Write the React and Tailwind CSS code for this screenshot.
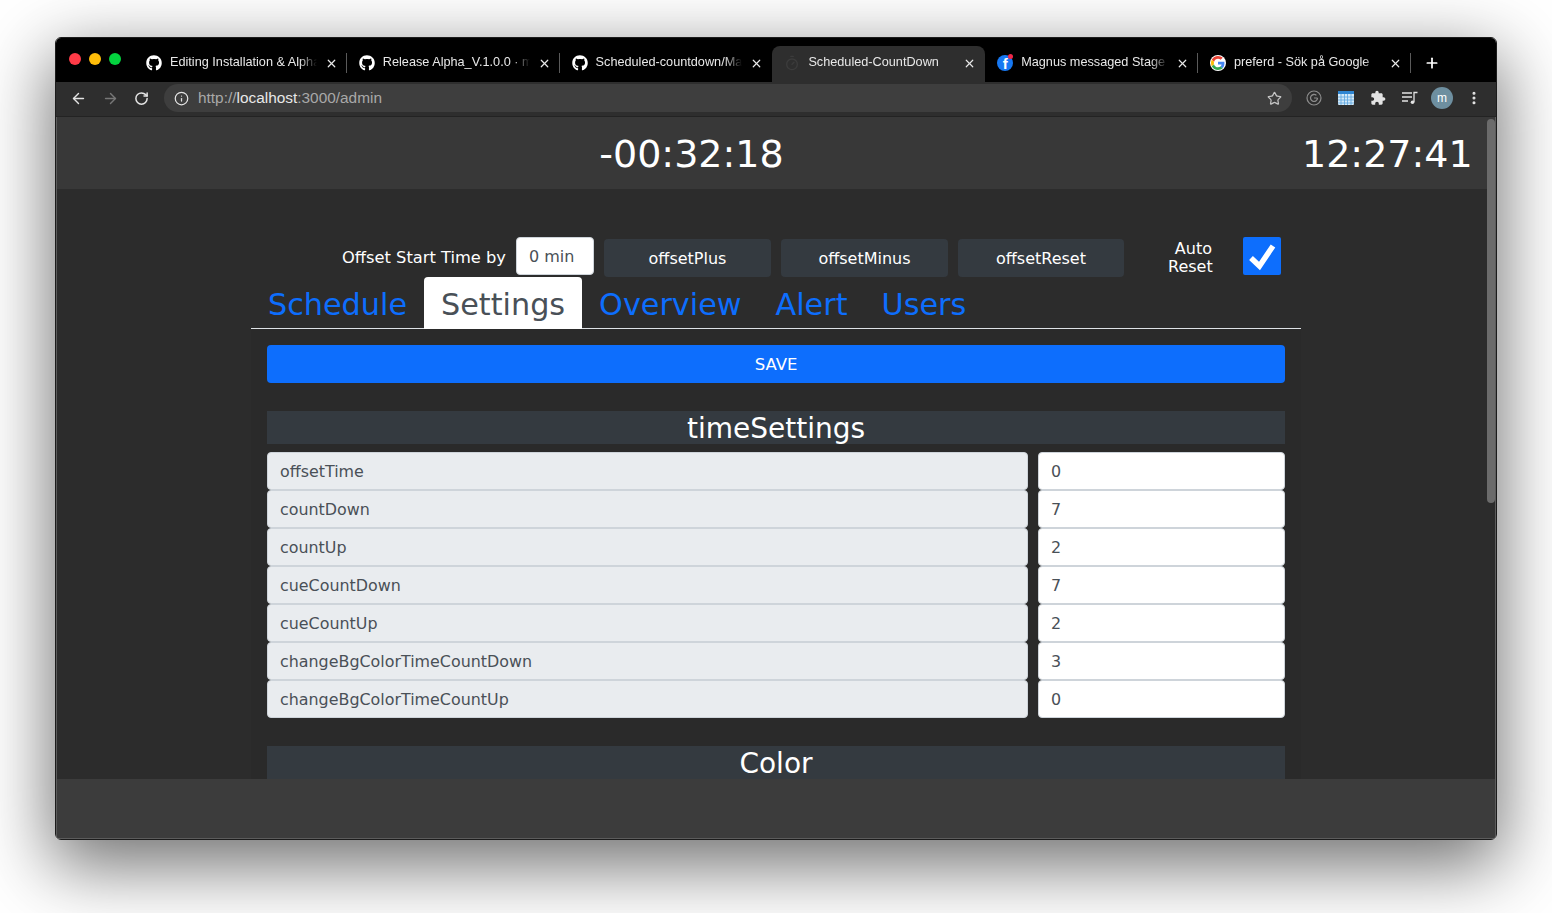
import React from 'react';
import { ArrowLeft, ArrowRight, RotateCw, Info, Star, X, Plus, Timer, EllipsisVertical } from 'lucide-react';
import { FaGithub } from 'react-icons/fa';

const GoogleIcon = () => (
  <span className="flex h-4 w-4 items-center justify-center rounded-full bg-white">
    <svg viewBox="0 0 48 48" className="h-[14px] w-[14px]">
      <path fill="#EA4335" d="M24 9.5c3.5 0 6.7 1.2 9.2 3.6l6.9-6.9C35.9 2.4 30.5 0 24 0 14.6 0 6.5 5.4 2.6 13.2l8 6.2C12.5 13.7 17.800 9.500 24 9.500z" />
      <path fill="#4285F4" d="M46.100 24.500c0-1.600-.1-3.100-.4-4.500H24v9h12.400c-.5 2.900-2.200 5.300-4.600 7l7.500 5.800c4.300-4 6.800-10 6.800-17.300z" />
      <path fill="#FBBC05" d="M10.600 28.600c-.5-1.400-.8-3-.8-4.600s.3-3.200.8-4.600l-8-6.200C.9 16.500 0 20.100 0 24s.9 7.500 2.600 10.800l8-6.200z" />
      <path fill="#34A853" d="M24 48c6.500 0 11.900-2.100 15.900-5.800l-7.500-5.800c-2.100 1.400-4.800 2.300-8.400 2.300-6.200 0-11.500-4.200-13.400-9.900l-8 6.200C6.500 42.600 14.600 48 24 48z" />
    </svg>
  </span>
);

const FacebookIcon = () => (
  <span className="relative flex h-4 w-4 items-end justify-center overflow-visible rounded-full bg-[#1778f2]">
    <span className="font-['Liberation_Sans',sans-serif] text-[15px] leading-[14px] font-bold text-white">f</span>
    <span className="absolute -top-[1px] right-0 h-[5px] w-[5px] rounded-full bg-[#f02849]" />
  </span>
);

const CircleIcon = () => (
  <svg viewBox="0 0 16 16" className="h-4 w-4" fill="none" stroke="#8c8c8c">
    <circle cx="8" cy="8" r="7" strokeWidth="1.2" />
    <path d="M11.500 8a3.500 3.500 0 1 1-1.100-2.600" strokeWidth="1.300" />
    <path d="M8 8h3.500" strokeWidth="1.100" />
  </svg>
);

const CalendarIcon = () => (
  <svg viewBox="0 0 16 14" className="h-[14px] w-4">
    <rect width="16" height="14" rx="1" fill="#d4e9f7" />
    <rect width="16" height="3" fill="#2f86d2" />
    <path d="M0 6h16M0 9h16M0 12h16M3 3v11M6.500 3v11M9.500 3v11M13 3v11" stroke="#5ba5e0" strokeWidth="0.8" />
  </svg>
);

const ExtensionIcon = () => (
  <svg viewBox="0 0 24 24" className="h-4 w-4" fill="#e3e3e3">
    <path d="M20.500 11H19V7c0-1.100-.9-2-2-2h-4V3.500C13 2.120 11.880 1 10.500 1S8 2.120 8 3.500V5H4c-1.100 0-1.990.9-1.990 2v3.800H3.500c1.490 0 2.700 1.210 2.700 2.700s-1.210 2.700-2.700 2.700H2V20c0 1.100.9 2 2 2h3.800v-1.500c0-1.490 1.210-2.700 2.700-2.700 1.490 0 2.700 1.210 2.700 2.700V22H17c1.100 0 2-.9 2-2v-4h1.500c1.380 0 2.500-1.120 2.500-2.500S21.880 11 20.500 11z" />
  </svg>
);

const QueueIcon = () => (
  <svg viewBox="0 0 16 14" className="h-[14px] w-4" fill="none" stroke="#e3e3e3" strokeWidth="1.300">
    <path d="M0 2h10M0 6h10M0 10h6" />
    <path d="M12 11V1.500h3.500" />
    <circle cx="10.500" cy="11.200" r="1.800" fill="#e3e3e3" stroke="none" />
  </svg>
);

const tabs = [
  { title: 'Editing Installation & Alpha Release', icon: <FaGithub size={16} className="text-white" />, divider: true },
  { title: 'Release Alpha_V.1.0.0 · magnus', icon: <FaGithub size={16} className="text-white" />, divider: true },
  { title: 'Scheduled-countdown/Main.js', icon: <FaGithub size={16} className="text-white" /> },
  { title: 'Scheduled-CountDown', icon: <Timer size={16} className="text-[#3c3c3c]" />, active: true },
  { title: 'Magnus messaged Stage - Timer', icon: <FacebookIcon />, divider: true },
  { title: 'preferd - Sök på Google', icon: <GoogleIcon />, divider: true },
];

const Tab = ({ title, icon, active, divider }) => (
  <div className={`flex h-[36px] w-[212.8px] items-center pb-[2px] pl-[12px] ${active ? 'rounded-t-lg bg-[#2e2e2e]' : ''}`}>
    <div className="w-4 shrink-0">{icon}</div>
    <span className="ml-2 min-w-0 flex-1 overflow-hidden text-[12.7px] whitespace-nowrap text-[#e8e8e8] [mask-image:linear-gradient(to_right,black_88%,transparent)]">
      {title}
    </span>
    <X size={13} strokeWidth={2.2} className="ml-2 shrink-0 text-[#e8e8e8]" />
    <div className={`ml-[8px] h-[20px] w-px shrink-0 ${divider ? 'bg-[#5a5a5a]' : 'bg-transparent'}`} />
  </div>
);

const BrowserChrome = () => (
  <div className="shrink-0 font-['Liberation_Sans',sans-serif]">
    <div className="flex h-[44px] bg-black">
      <div className="flex w-[78px] items-start gap-2 pt-[15px] pl-[13px]">
        <span className="h-3 w-3 shrink-0 rounded-full bg-[#ff3b47]" />
        <span className="h-3 w-3 shrink-0 rounded-full bg-[#ffbd09]" />
        <span className="h-3 w-3 shrink-0 rounded-full bg-[#04d33f]" />
      </div>
      <div className="flex items-end">
        {tabs.map((t) => (
          <Tab key={t.title} {...t} />
        ))}
      </div>
      <div className="flex items-center pt-[5px] pl-[13px]">
        <Plus size={16} strokeWidth={2.6} className="text-white" />
      </div>
    </div>
    <div className="flex h-[35px] items-center border-b border-[#232323] bg-[#2e2e2e] pb-[2px]">
      <div className="flex w-[108px] items-center gap-[15px] pl-[14px]">
        <ArrowLeft size={17} strokeWidth={2} className="text-[#e3e3e3]" />
        <ArrowRight size={17} strokeWidth={2} className="text-[#777777]" />
        <RotateCw size={15} strokeWidth={2.4} className="text-[#e3e3e3]" />
      </div>
      <div className="flex h-[28px] w-[1128px] items-center rounded-full bg-[#3e3e3e] px-[10px]">
        <Info size={15} className="text-[#e3e3e3]" />
        <span className="ml-[9px] flex-1 text-[15.4px] text-[#a8a8a8]">
          http://<span className="text-[#e8e8e8]">localhost</span>:3000/admin
        </span>
        <Star size={15} className="text-[#c4c4c4]" />
      </div>
      <div className="flex flex-1 items-center pl-[6px]">
        <div className="flex w-8 justify-center"><CircleIcon /></div>
        <div className="flex w-8 justify-center"><CalendarIcon /></div>
        <div className="flex w-8 justify-center"><ExtensionIcon /></div>
        <div className="flex w-8 justify-center"><QueueIcon /></div>
        <div className="flex w-8 justify-center">
          <span className="flex h-[22px] w-[22px] items-center justify-center rounded-full bg-[#6e8fa0] text-[12px] text-white">m</span>
        </div>
        <div className="flex w-8 justify-center"><EllipsisVertical size={16} strokeWidth={2.6} className="text-[#e3e3e3]" /></div>
      </div>
    </div>
  </div>
);

const timeRows = [
  ['offsetTime', '0'],
  ['countDown', '7'],
  ['countUp', '2'],
  ['cueCountDown', '7'],
  ['cueCountUp', '2'],
  ['changeBgColorTimeCountDown', '3'],
  ['changeBgColorTimeCountUp', '0'],
];

const SettingRow = ({ label, value }) => (
  <div className="flex h-[38px] gap-[10px]">
    <div className="flex w-[761px] items-center rounded-[4px] border border-[#ced4da] bg-[#e9ecef] px-[12px] pt-[2px] text-[15.9px] text-[#495057]">{label}</div>
    <div className="flex w-[247px] items-center rounded-[4px] border border-[#ced4da] bg-white px-[12px] pt-[2px] text-[15.9px] text-[#495057]">{value}</div>
  </div>
);

const OffsetButton = ({ children, className }) => (
  <div className={`flex h-[38px] items-center justify-center rounded-[4px] bg-[#343a40] pt-[2px] text-[16px] text-white ${className}`}>{children}</div>
);

const Check = () => (
  <svg viewBox="0 0 38 38" className="h-[38px] w-[38px]">
    <rect width="38" height="38" rx="2" fill="#0d6efd" />
    <path d="M8 21l8.500 8L30 9" fill="none" stroke="white" strokeWidth="5.500" />
  </svg>
);

const navItems = ['Schedule', 'Settings', 'Overview', 'Alert', 'Users'];

const Page = () => (
  <div className="relative flex min-h-0 flex-1 flex-col border-x border-b border-[#5c5c5c] bg-[#2c2c2c] font-['DejaVu_Sans',sans-serif]">
    <header className="flex h-[72px] shrink-0 items-center bg-[#383838] pt-[2px] text-white">
      <div className="w-[1245px] shrink-0 pl-[24px] text-center text-[38px] leading-none">-00:32:18</div>
      <div className="text-[38px] leading-none whitespace-nowrap">12:27:41</div>
    </header>

    <main className="min-h-0 flex-1 overflow-hidden">
      <div className="ml-[194px] w-[1050px]">
        <div className="flex h-[88px] pt-[48px] text-[16px] text-white">
          <div className="flex w-[255px] items-center justify-end pt-[2px] text-[16.3px] whitespace-nowrap">Offset Start Time by</div>
          <div className="ml-[10px] flex h-[38px] w-[78px] items-center rounded-[4px] border border-[#ced4da] bg-white px-[12px] pt-[2px] text-[#495057]">0 min</div>
          <OffsetButton className="mt-[2px] ml-[10px] w-[167px]">offsetPlus</OffsetButton>
          <OffsetButton className="mt-[2px] ml-[10px] w-[167px]">offsetMinus</OffsetButton>
          <OffsetButton className="mt-[2px] ml-[10px] w-[166px]">offsetReset</OffsetButton>
          <div className="mt-[3px] ml-[44px] w-[44px] text-right leading-[18px] whitespace-nowrap">Auto<br />Reset</div>
          <div className="ml-[31px]"><Check /></div>
        </div>

        <nav className="flex h-[52px] border-b border-[#dee2e6] text-[30.25px] leading-none">
          {navItems.map((item) => (
            <div
              key={item}
              className={`flex h-[52px] items-center rounded-t-[4px] px-[17px] pt-[4px] ${item === 'Settings' ? 'bg-white text-[#495057]' : 'text-[#0d6efd]'}`}
            >
              {item}
            </div>
          ))}
        </nav>

        <div className="bg-[#2a2a2a] px-[16px] pt-[16px]">
          <div className="flex h-[38px] items-center justify-center rounded-[4px] bg-[#0d6efd] pt-[2px] text-[16.5px] text-white">SAVE</div>
          <div className="mt-[28px] flex h-[33px] items-center justify-center bg-[#343a40] pt-[2px] text-[28px] text-white">timeSettings</div>
          <div className="mt-[8px] flex flex-col">
            {timeRows.map(([label, value]) => (
              <SettingRow key={label} label={label} value={value} />
            ))}
          </div>
          <div className="mt-[28px] flex h-[33px] items-center justify-center bg-[#343a40] pt-[2px] text-[28px] text-white">Color</div>
        </div>
      </div>
    </main>

    <footer className="h-[59px] shrink-0 bg-[#3c3c3c]" />

    <div className="absolute top-[2px] right-0 h-[384px] w-[8px] rounded-full bg-[#6b6b6b]" />
  </div>
);

export default function App() {
  return (
    <div className="h-[913px] w-[1552px] overflow-hidden bg-white pt-[37px] pl-[55px]">
      <div className="flex h-[803px] w-[1442px] flex-col overflow-hidden rounded-[6px] border border-[#1c1c1c] shadow-[0_22px_70px_4px_rgba(0,0,0,0.56)]">
        <BrowserChrome />
        <Page />
      </div>
    </div>
  );
}
